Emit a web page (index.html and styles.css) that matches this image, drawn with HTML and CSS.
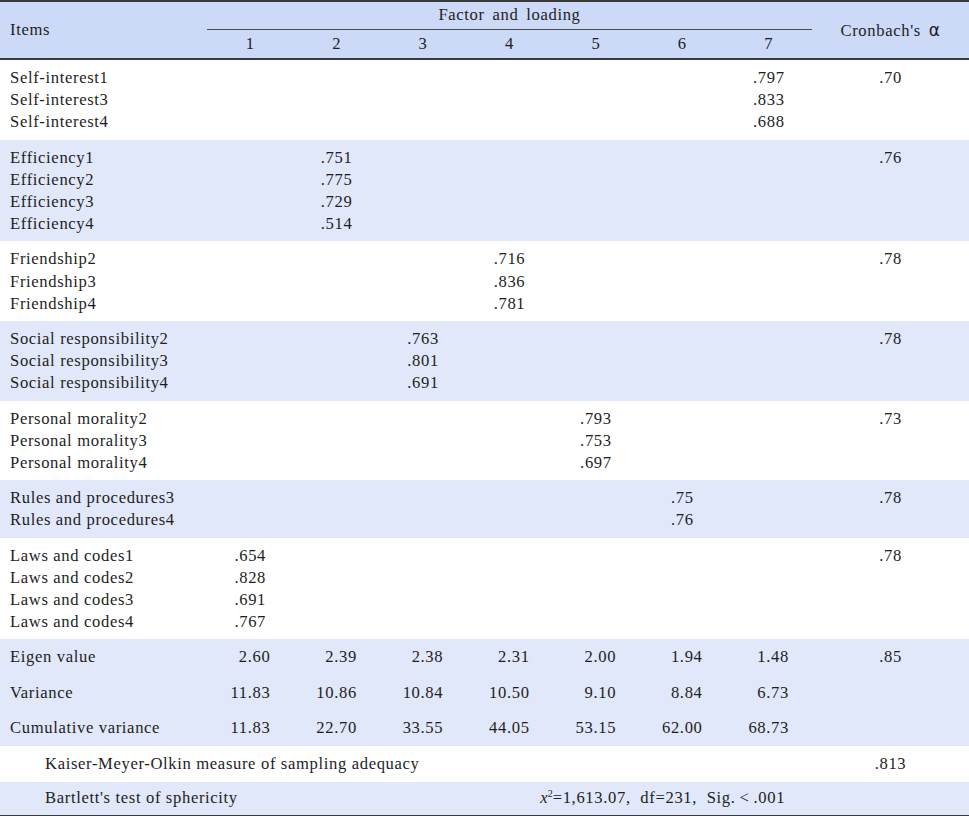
FILE: index.html
```html
<!DOCTYPE html>
<html>
<head>
<meta charset="utf-8">
<link rel="stylesheet" href="styles.css">
</head>
<body>
<table class="fa">
  <colgroup>
    <col class="c-items">
    <col class="c-f"><col class="c-f"><col class="c-f"><col class="c-f"><col class="c-f"><col class="c-f"><col class="c-f">
    <col class="c-alpha">
  </colgroup>
  <thead>
    <tr class="h1">
      <th rowspan="2" class="items-h">Items</th>
      <th colspan="7" class="span-h">Factor and loading</th>
      <th rowspan="2" class="alpha-h">Cronbach's <span class="alpha">α</span></th>
    </tr>
    <tr class="h2">
      <th>1</th><th>2</th><th>3</th><th>4</th><th>5</th><th>6</th><th>7</th>
    </tr>
  </thead>
  <tbody>
    <tr class="grp">
      <td class="lbl">Self-interest1<br>Self-interest3<br>Self-interest4</td>
      <td></td><td></td><td></td><td></td><td></td><td></td>
      <td>.797<br>.833<br>.688</td>
      <td>.70</td>
    </tr>
    <tr class="grp shade">
      <td class="lbl">Efficiency1<br>Efficiency2<br>Efficiency3<br>Efficiency4</td>
      <td></td>
      <td>.751<br>.775<br>.729<br>.514</td>
      <td></td><td></td><td></td><td></td><td></td>
      <td>.76</td>
    </tr>
    <tr class="grp">
      <td class="lbl">Friendship2<br>Friendship3<br>Friendship4</td>
      <td></td><td></td><td></td>
      <td>.716<br>.836<br>.781</td>
      <td></td><td></td><td></td>
      <td>.78</td>
    </tr>
    <tr class="grp shade">
      <td class="lbl">Social responsibility2<br>Social responsibility3<br>Social responsibility4</td>
      <td></td><td></td>
      <td>.763<br>.801<br>.691</td>
      <td></td><td></td><td></td><td></td>
      <td>.78</td>
    </tr>
    <tr class="grp">
      <td class="lbl">Personal morality2<br>Personal morality3<br>Personal morality4</td>
      <td></td><td></td><td></td><td></td>
      <td>.793<br>.753<br>.697</td>
      <td></td><td></td>
      <td>.73</td>
    </tr>
    <tr class="grp shade">
      <td class="lbl">Rules and procedures3<br>Rules and procedures4</td>
      <td></td><td></td><td></td><td></td><td></td>
      <td>.75<br>.76</td>
      <td></td>
      <td>.78</td>
    </tr>
    <tr class="grp">
      <td class="lbl">Laws and codes1<br>Laws and codes2<br>Laws and codes3<br>Laws and codes4</td>
      <td>.654<br>.828<br>.691<br>.767</td>
      <td></td><td></td><td></td><td></td><td></td><td></td>
      <td>.78</td>
    </tr>
    <tr class="stat shade">
      <td class="lbl">Eigen value</td>
      <td class="num">2.60</td><td class="num">2.39</td><td class="num">2.38</td><td class="num">2.31</td><td class="num">2.00</td><td class="num">1.94</td><td class="num">1.48</td>
      <td>.85</td>
    </tr>
    <tr class="stat shade">
      <td class="lbl">Variance</td>
      <td class="num">11.83</td><td class="num">10.86</td><td class="num">10.84</td><td class="num">10.50</td><td class="num">9.10</td><td class="num">8.84</td><td class="num">6.73</td>
      <td></td>
    </tr>
    <tr class="stat shade">
      <td class="lbl">Cumulative variance</td>
      <td class="num">11.83</td><td class="num">22.70</td><td class="num">33.55</td><td class="num">44.05</td><td class="num">53.15</td><td class="num">62.00</td><td class="num">68.73</td>
      <td></td>
    </tr>
    <tr class="stat">
      <td class="lbl ind" colspan="8">Kaiser-Meyer-Olkin measure of sampling adequacy</td>
      <td>.813</td>
    </tr>
    <tr class="stat last shade">
      <td class="lbl ind" colspan="4">Bartlett's test of sphericity</td>
      <td class="chi" colspan="5"><i>x</i><sup>2</sup>=1,613.07,&nbsp; df=231,&nbsp; Sig.&thinsp;&lt;&thinsp;.001</td>
    </tr>
  </tbody>
</table>
</body>
</html>
```

FILE: styles.css
```css
html, body {
  margin: 0;
  padding: 0;
  background: #ffffff;
}

.fa {
  width: 969px;
  border-collapse: collapse;
  table-layout: fixed;
  font-family: "Liberation Serif", "Times New Roman", serif;
  font-size: 16.6px;
  letter-spacing: 0.65px;
  color: #1e1e1e;
  border-top: 2px solid #3a3a3a;
  border-bottom: 2px solid #3a3a3a;
}

.c-items { width: 207px; }
.c-f { width: 86.43px; }
.c-alpha { width: 157px; }

thead {
  background: #ccd9f7;
}

thead th {
  font-weight: normal;
  padding: 0;
  line-height: 22px;
  text-align: center;
}

.h1 { height: 28px; }
.h2 { height: 30px; border-bottom: 2px solid #3a3a3a; }

.items-h {
  text-align: left;
  padding-left: 10px;
  vertical-align: middle;
}

.span-h {
  border-bottom: 1.5px solid #4a4a4a;
  vertical-align: middle;
  word-spacing: 3px;
}

.alpha-h {
  vertical-align: middle;
}

.alpha {
  font-family: "DejaVu Sans", sans-serif;
  font-size: 17px;
  margin-left: 3px;
}

tbody td {
  padding: 0;
  text-align: center;
  vertical-align: top;
  line-height: 22.2px;
}

.grp td {
  padding-top: 7px;
  padding-bottom: 6px;
}

.shade {
  background: #e1e8f9;
}

.stat td {
  padding-top: 6.7px;
  padding-bottom: 6.7px;
  vertical-align: middle;
}

.stat.last td {
  padding-top: 5.4px;
  padding-bottom: 5.4px;
}

td.lbl {
  text-align: left;
  padding-left: 10px;
}

td.ind {
  padding-left: 45px;
}

td.num {
  text-align: right;
  padding-right: 23px;
}

td.chi {
  text-align: left;
  padding-left: 74px;
}

.chi sup {
  font-size: 10px;
  line-height: 0;
  vertical-align: 6px;
  letter-spacing: 0;
}

.chi i {
  letter-spacing: 0;
}
```
